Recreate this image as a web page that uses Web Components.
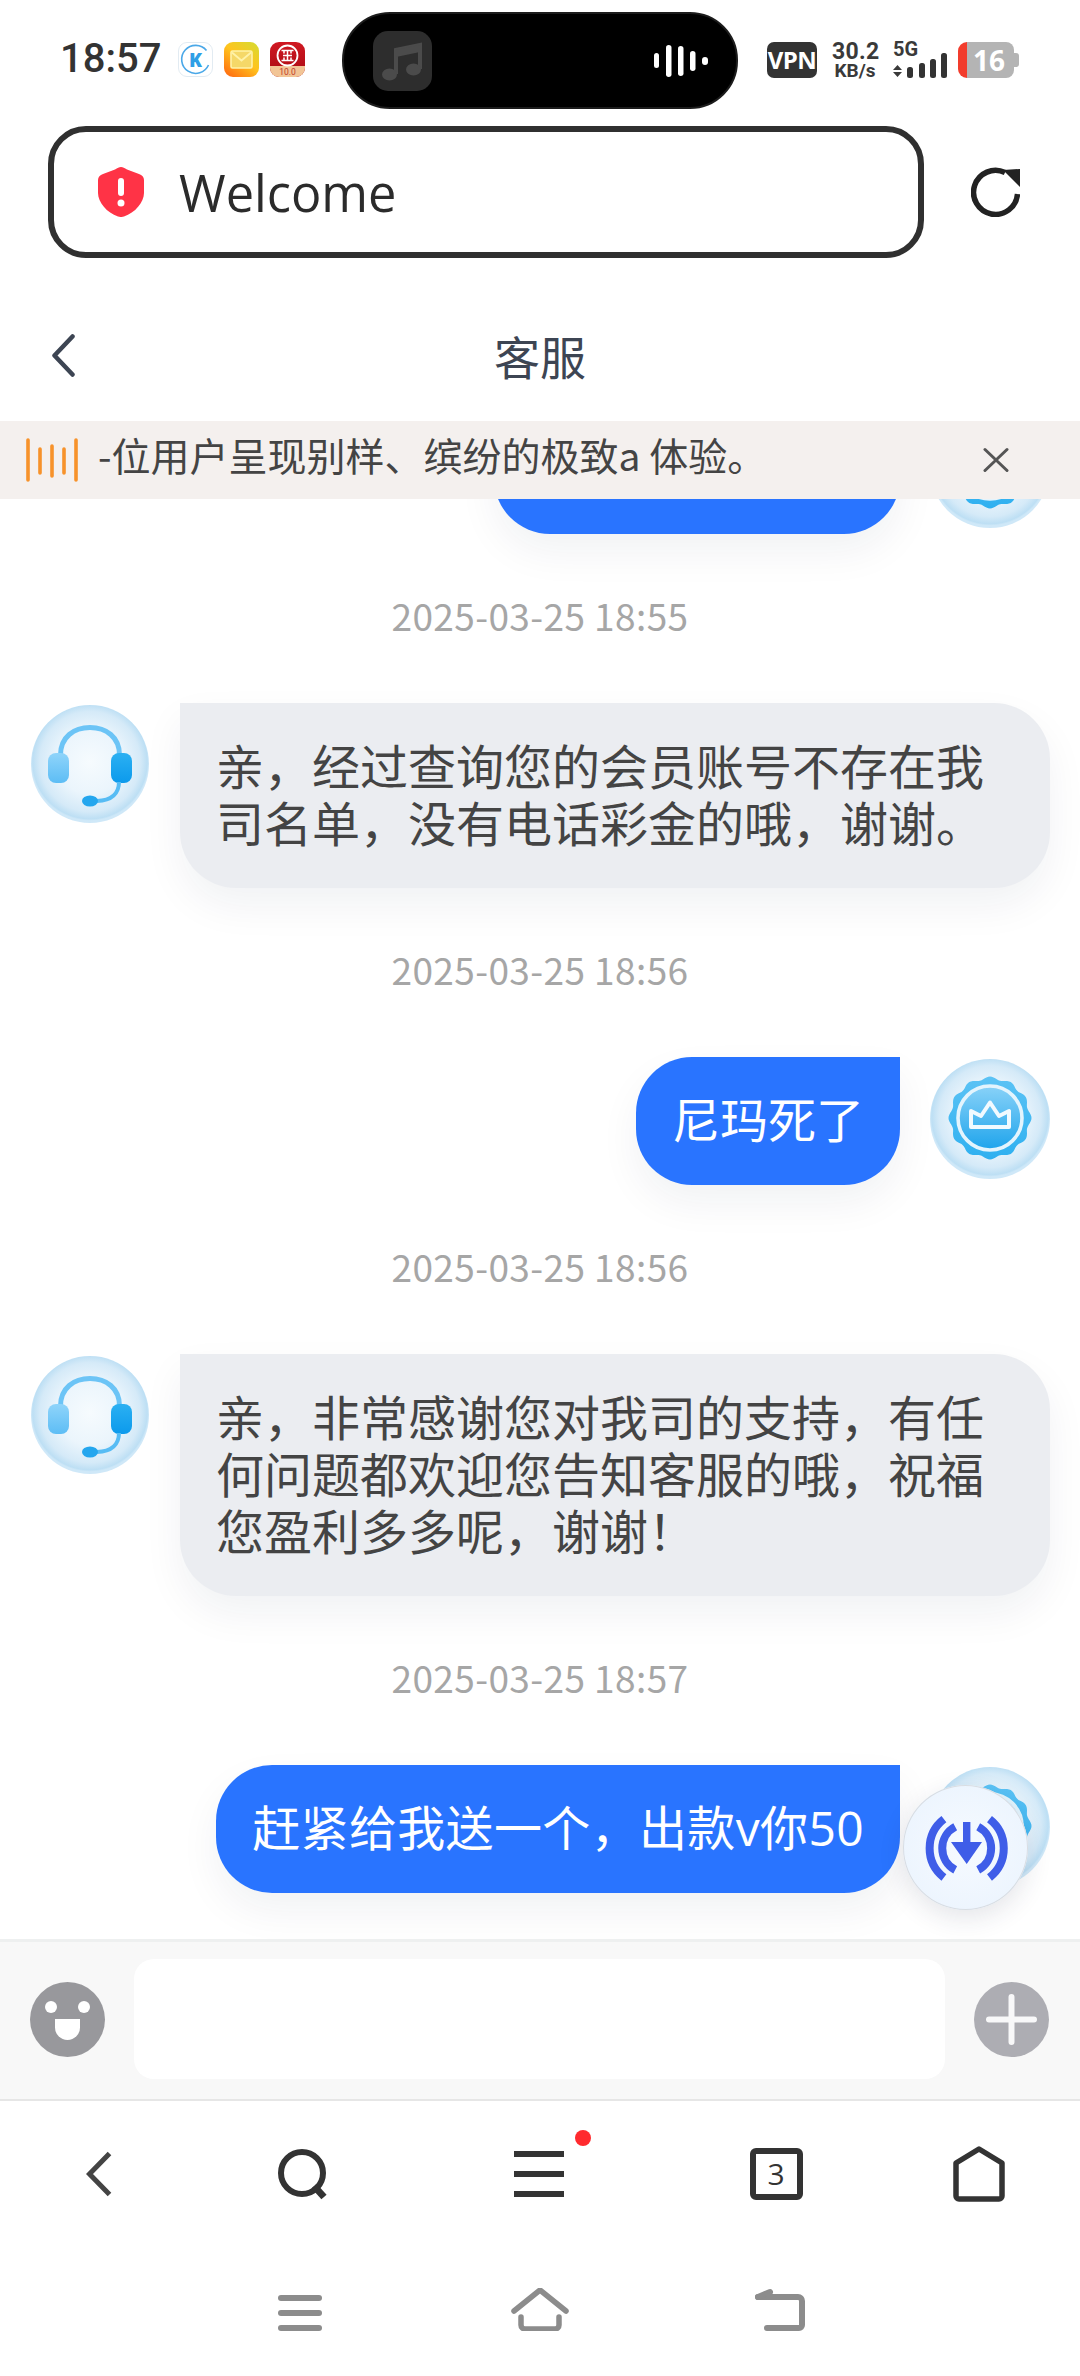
<!DOCTYPE html>
<html lang="zh"><head><meta charset="utf-8"><title>客服</title>
<style>
html,body{margin:0;padding:0;background:#fff}
body{width:1080px;height:2376px;overflow:hidden;display:flex;flex-direction:column;font-family:"Noto Sans CJK SC","Noto Sans",sans-serif}
</style></head><body>
<phone-status></phone-status>
<address-bar></address-bar>
<chat-header>客服</chat-header>
<notice-bar>-位用户呈现别样、缤纷的极致a 体验。</notice-bar>
<chat-list>
  <chat-row side="right" empty></chat-row>
  <time-label>2025-03-25 18:55</time-label>
  <chat-row side="left">亲，经过查询您的会员账号不存在我司名单，没有电话彩金的哦，谢谢。</chat-row>
  <time-label>2025-03-25 18:56</time-label>
  <chat-row side="right">尼玛死了</chat-row>
  <time-label>2025-03-25 18:56</time-label>
  <chat-row side="left">亲，非常感谢您对我司的支持，有任何问题都欢迎您告知客服的哦，祝福您盈利多多呢，谢谢！</chat-row>
  <time-label>2025-03-25 18:57</time-label>
  <chat-row side="right" style="letter-spacing:.35px">赶紧给我送一个，出款v你50</chat-row>
  <float-btn></float-btn>
</chat-list>
<chat-input></chat-input>
<browser-nav></browser-nav>
<system-nav></system-nav>
<script>
function def(name, css, html, init){
  customElements.define(name, class extends HTMLElement{
    constructor(){super();const r=this.attachShadow({mode:'open'});
      r.innerHTML='<style>'+css+'</style>'+(typeof html==='function'?html(this):html);}
    connectedCallback(){ if(init) init(this); }
  });
}
def('phone-status',`
:host{display:flex;height:120px;flex:none;align-items:flex-start;color:#333}
.left{width:342px;flex:none;display:flex;align-items:center;height:34px;margin-top:42px;box-sizing:border-box;padding-left:60px}
.time{font:500 40px/34px Roboto,sans-serif;color:#333;width:118px;flex:none;white-space:nowrap}
.left svg{display:block;flex:none;margin-right:11px}
.island{width:396px;height:97px;margin-top:12px;flex:none;box-sizing:border-box;background:#000;border:2px solid #1c1c1c;border-radius:48px;display:flex;align-items:center;padding:0 28px 0 29px;justify-content:space-between}
.music{width:59px;height:60px;display:block}
.wave{display:block}
.right{position:relative;flex:1;height:36px;margin-top:42px;display:flex;align-items:flex-start;padding-left:29px}
.vpn{width:50px;height:36px;flex:none;border-radius:7px;background:#333;color:#fff;font:700 24px/36px "Open Sans",sans-serif;text-align:center;letter-spacing:-.6px}
.speed{width:46px;margin-left:15px;flex:none;text-align:center;color:#3a3a3a}
.speed b{display:block;font:700 23px/19px Roboto,sans-serif;letter-spacing:.3px}
.speed i{display:block;font:700 19px/19px Roboto,sans-serif;font-style:normal}
.sig{margin-left:15px;flex:none;display:block;position:relative;width:54px;height:36px}
.sig span{position:absolute;left:0;top:0;font:700 20px/15px Roboto,sans-serif;color:#3a3a3a}
.sig svg{display:block}
.batt{margin-left:11px;flex:none;position:relative;width:62px;height:36px;display:flex}
.batt .red{width:9px;background:#f23c2c;border-radius:9px 0 0 9px}
.batt .gray{width:47px;background:#b4b4b4;border-radius:0 8px 8px 0;color:#fff;font:700 28px/36px "Open Sans",sans-serif;box-sizing:border-box;padding-left:6px}
.batt .nub{width:5px;height:14px;margin-top:11px;background:#b4b4b4;border-radius:0 3px 3px 0}
`,`
<div class="left"><span class="time">18:57</span>
<svg width="35" height="35" viewBox="0 0 35 35"><rect x=".5" y=".5" width="34" height="34" rx="8.5" fill="#fff" stroke="#e2ebf2"/><path d="M28.5 8.5A14 14 0 1 0 30.5 23" fill="none" stroke="#4aa8e8" stroke-width="1.6"/><text x="17.5" y="24.5" text-anchor="middle" font-family="Open Sans" font-weight="800" font-size="19" fill="#2f9fe6">K</text></svg>
<svg width="35" height="35" viewBox="0 0 35 35"><defs><linearGradient id="m" x1=".85" y1="0" x2=".1" y2="1"><stop offset="0" stop-color="#d9d92f"/><stop offset=".45" stop-color="#ffc41e"/><stop offset="1" stop-color="#ff6a10"/></linearGradient></defs><rect width="35" height="35" rx="9" fill="url(#m)"/><rect x="7" y="9" width="21" height="17" rx="1.5" fill="#f5d868" stroke="#fff2a8" stroke-width="1.6"/><path d="M8 10.5l9.5 8 9.5-8" fill="none" stroke="#fff2a8" stroke-width="1.8"/></svg>
<svg width="35" height="35" viewBox="0 0 35 35"><defs><clipPath id="b"><rect width="35" height="35" rx="9"/></clipPath><linearGradient id="r" x1="0" y1="0" x2="0" y2="1"><stop offset="0" stop-color="#d01822"/><stop offset="1" stop-color="#a80a12"/></linearGradient></defs><g clip-path="url(#b)"><rect width="35" height="35" fill="url(#r)"/><rect y="24" width="35" height="11" fill="#f2c596"/></g><circle cx="17.5" cy="13.5" r="10" fill="none" stroke="#fff" stroke-width="1.8"/><path d="M11.5 8.5h12M17.5 8.5v10M13 13.5h9M11.5 18.5h12M14 8.5v3M21 8.5v3M14 15.5v3M21 15.5v3" stroke="#fff" stroke-width="1.5" fill="none"/><text x="17.5" y="33" text-anchor="middle" font-family="Roboto" font-size="8.5" fill="#c0392b">10.0</text></svg>
</div>
<div class="island">
<svg class="music" viewBox="0 0 59 60"><rect width="59" height="60" rx="15" fill="#2d2d2d"/><path d="M23 43V19l24-5v24" fill="none" stroke="#4b4b4b" stroke-width="4"/><path d="M23 19l24-5v7l-24 5z" fill="#4b4b4b"/><ellipse cx="16.500" cy="43.500" rx="7.500" ry="6" fill="#4b4b4b"/><ellipse cx="40.500" cy="38.500" rx="7.500" ry="6" fill="#4b4b4b"/></svg>
<svg class="wave" width="54" height="34" viewBox="0 0 54 34" fill="#fff"><rect x="0" y="9" width="5" height="15" rx="2.500"/><rect x="12" y="1" width="5.500" height="32" rx="2.750"/><rect x="24" y="2" width="5.500" height="30" rx="2.750"/><rect x="36" y="7" width="5.500" height="20" rx="2.750"/><rect x="48" y="13" width="6" height="8" rx="3"/></svg>
</div>
<div class="right"><span class="vpn">VPN</span><span class="speed"><b>30.2</b><i>KB/s</i></span>
<span class="sig"><span>5G</span><svg width="54" height="36" viewBox="0 0 54 36"><path d="M0 28l4.500-5 4.500 5zM0 30l4.500 5 4.500-5z" fill="#3a3a3a"/><rect x="14" y="25" width="6" height="11" rx="2.500" fill="#333"/><rect x="26" y="21" width="6" height="15" rx="2.500" fill="#333"/><rect x="37" y="17" width="6" height="19" rx="2.500" fill="#333"/><rect x="48" y="11" width="6" height="25" rx="2.500" fill="#333"/></svg></span>
<span class="batt"><span class="red"></span><span class="gray">16</span><span class="nub"></span></span></div>
`);
def('address-bar',`
:host{display:flex;flex:none;align-items:center;height:132px;margin-top:6px;box-sizing:border-box;padding-left:48px}
.box{width:876px;height:132px;box-sizing:border-box;border:6px solid #303030;border-radius:38px;display:flex;align-items:center;padding-left:44px;gap:35px}
.t{font:400 50.5px/62px "Open Sans",sans-serif;color:#2b2b2b;padding-top:2px}
.rf{margin-left:47px;display:block}
`,`
<div class="box"><svg width="46" height="50" viewBox="0 0 46 50"><path d="M23 0c2 0 3.500 1 6 2.500L41 7c3 1 5 3 5 6v13c0 9-9 20-20 23.500-2 .7-4 .7-6 0C9 46 0 35 0 26V13c0-3 2-5 5-6l12-4.500C19.500 1 21 0 23 0z" fill="#ff3346"/><rect x="20" y="11" width="6" height="18" rx="3" fill="#fff"/><circle cx="23" cy="36" r="3.500" fill="#fff"/></svg><span class="t">Welcome</span></div>
<svg class="rf" width="49" height="50" viewBox="0 0 49 50"><path d="M46.500 27A22 22 0 1 1 34 5.500" fill="none" stroke="#222" stroke-width="5.500"/><path d="M32 3L49 2v18z" fill="#222"/></svg>
`);
def('chat-header',`
:host{display:flex;flex:none;height:126px;margin-top:37px;align-items:center;justify-content:center;position:relative;color:#3d4553;font-size:46px;line-height:60px}
svg{position:absolute;left:52px;top:39px}
.t{padding-bottom:6px}
`,`<svg width="23" height="43" viewBox="0 0 23 43"><path d="M20.500 2.500L2.500 21.500l18 19" fill="none" stroke="#3d4553" stroke-width="4.500" stroke-linecap="round" stroke-linejoin="round"/></svg><span class="t"><slot></slot></span>`);
def('notice-bar',`
:host{display:flex;flex:none;height:78px;background:#f4f0ee;align-items:center;color:#444;font-size:39px;line-height:50px;position:relative;z-index:2;box-sizing:border-box;padding-left:26px}
.txt{margin-left:20px;flex:1;white-space:nowrap;padding-bottom:12px}
.bars{display:block}
.x{display:block;margin-right:71px}
`,`<svg class="bars" width="52" height="44" viewBox="0 0 52 44" stroke="#f7922a" stroke-width="3.600" stroke-linecap="round"><path d="M2 2v40M14 11v24M26 8v30M38 11v24M50 2v40"/></svg><span class="txt"><slot></slot></span><svg class="x" width="26" height="26" viewBox="0 0 26 26"><path d="M2 2.500l22 21M24 2.500l-22 21" stroke="#555" stroke-width="3" stroke-linecap="round"/></svg>`);
def('chat-list',`
:host{display:flex;flex-direction:column;justify-content:flex-end;flex:none;height:1440px;overflow:hidden;position:relative;box-sizing:border-box;padding-bottom:46px;background:#fff}
`,`<slot></slot>`);
def('time-label',`
:host{display:block;flex:none;text-align:center;color:#a6a6a6;font-size:37px;line-height:48px;margin:57px 0 64px;letter-spacing:.4px}
`,`<slot></slot>`);
const sphere=`<defs><radialGradient id="s" cx=".5" cy=".48" r=".5"><stop offset="0" stop-color="#f6fbfe"/><stop offset=".55" stop-color="#ebf5fc"/><stop offset=".85" stop-color="#d5eaf8"/><stop offset=".97" stop-color="#bddff4"/><stop offset="1" stop-color="#cfe8f8"/></radialGradient>`;
const agentSvg=`<svg width="118" height="118" viewBox="0 0 118 118">${sphere}<linearGradient id="e1" x1="0" y1="0" x2="0" y2="1"><stop offset="0" stop-color="#8fd4fa"/><stop offset="1" stop-color="#5dbdf5"/></linearGradient><linearGradient id="e2" x1="0" y1="0" x2="0" y2="1"><stop offset="0" stop-color="#2bb0f2"/><stop offset="1" stop-color="#0c9aec"/></linearGradient></defs><circle cx="59" cy="59" r="59" fill="url(#s)"/><path d="M29.500 50C29.500 32 43 22.500 59 22.500S88.500 32 88.500 50" fill="none" stroke="#6cc4f6" stroke-width="5"/><rect x="17" y="48" width="21" height="30" rx="8" fill="url(#e1)"/><rect x="80" y="48" width="21" height="30" rx="8" fill="url(#e2)"/><path d="M88 77c0 11-7 18.500-22 19" fill="none" stroke="#57bcf4" stroke-width="4"/><ellipse cx="59" cy="96" rx="8" ry="5.500" fill="#24a6ee"/></svg>`;
let pts=[];for(let i=0;i<144;i++){const a=i/144*Math.PI*2,r=40+1.5*Math.cos(12*a);pts.push((60+r*Math.sin(a)).toFixed(1)+','+(59-r*Math.cos(a)).toFixed(1));}
const crownSvg=`<svg width="120" height="120" viewBox="0 0 120 120">${sphere}<linearGradient id="c1" x1="0" y1="0" x2="0" y2="1"><stop offset="0" stop-color="#5cc3f5"/><stop offset="1" stop-color="#2fb0f0"/></linearGradient><linearGradient id="c2" x1="0" y1="0" x2="0" y2="1"><stop offset="0" stop-color="#89d2f8"/><stop offset="1" stop-color="#1ea4ec"/></linearGradient></defs><circle cx="60" cy="60" r="60" fill="url(#s)"/><polygon points="${pts.join(' ')}" fill="url(#c1)"/><circle cx="60" cy="59" r="32" fill="url(#c2)" stroke="#e3f4fd" stroke-width="3.600"/><path d="M41 52l10 5 9-13.500 9 13.500 10-5v16H41z" fill="none" stroke="#f2faff" stroke-width="4" stroke-linejoin="round"/></svg>`;
def('chat-row',`
:host{display:flex;flex:none;gap:31px;padding:0 30px;align-items:flex-start}
:host([side=left]){padding-left:31px}
:host([side=right]){flex-direction:row-reverse;gap:30px}
.a{flex:none;display:block;margin-top:2px;width:120px}
:host([side=left]) .a{width:118px}
.b{font-family:"Open Sans","Noto Sans CJK SC",sans-serif;font-size:48px;line-height:57px;padding:35px 36px 36px;border-radius:56px;box-shadow:0 18px 40px rgba(20,30,60,.06);box-sizing:border-box;min-height:128px}
:host([side=left]) .b{flex:1;background:#ebedf1;color:#444;border-top-left-radius:0}
:host([side=right]) .b{background:#2974ff;color:#fff;border-top-right-radius:0;padding-top:34px}
:host([empty]) .b{width:406px}
svg{display:block}
`,el=>`<div class="a">${el.getAttribute('side')==='left'?agentSvg:crownSvg}</div><div class="b"><slot></slot></div>`);
def('float-btn',`
:host{position:absolute;right:52px;bottom:29px;width:125px;height:125px;display:block;z-index:3;border-radius:50%;background:radial-gradient(circle,#f6faff 0,#edf5fe 70%,#e6f1fc 100%);box-shadow:0 0 0 1px #d8dde3 inset,0 8px 26px rgba(30,40,70,.12)}
svg{display:block}
`,`<svg width="125" height="125" viewBox="0 0 125 125" fill="none" stroke="#3f5de8" stroke-width="8"><path d="M40.900 34.100A37 37 0 0 0 40.900 92.500M86.500 34.100A37 37 0 0 1 86.500 92.500"/><path d="M52.200 41.700A24.500 24.500 0 0 0 52.200 84.900M75.200 41.700A24.500 24.500 0 0 1 75.200 84.900"/><path d="M60 37h7.400v20H79L63.700 79 48 57h12z" fill="#3f5de8" stroke="none"/></svg>`);
def('chat-input',`
:host{display:flex;flex:none;height:162px;box-sizing:border-box;background:#f8f8f8;border-top:3px solid #eef0f0;border-bottom:2px solid #e6e6e6;align-items:center;padding:0 30px 3px}
.f{flex:none;width:811px;height:120px;border-radius:20px;background:#fff;margin:0 29px 0 29px}
svg{display:block;flex:none}
`,`<svg width="75" height="75" viewBox="0 0 75 75"><circle cx="37.500" cy="37.500" r="37.500" fill="#98989c"/><circle cx="21" cy="25" r="6" fill="#fff"/><circle cx="54" cy="25" r="6" fill="#fff"/><path d="M25 37h25v8.500a12.500 12.500 0 0 1-25 0z" fill="#fff"/></svg><div class="f"></div><svg width="75" height="75" viewBox="0 0 75 75"><circle cx="37.500" cy="37.500" r="37.500" fill="#adadb3"/><path d="M15 37.500h45M37.500 15v45" stroke="#fff" stroke-width="6" stroke-linecap="round" opacity=".92"/></svg>`);
def('browser-nav',`
:host{display:grid;flex:none;height:146px;grid-template-columns:198px 210px 262px 212px 194px;align-items:center;justify-items:center;position:relative}
svg{display:block}
.tab{position:relative;width:53px;height:52px;box-sizing:border-box;border:6px solid #333;border-radius:6px;text-align:center;color:#333;font:500 30px/40px "Open Sans",sans-serif}
.m{position:relative;width:50px}
.dot{position:absolute;left:61px;top:-21px;width:16px;height:16px;border-radius:50%;background:#ff2a2e}
`,`
<svg width="26" height="46" viewBox="0 0 26 46"><path d="M23.500 2.500L3.500 23l20 20.500" fill="none" stroke="#444" stroke-width="5"/></svg>
<svg width="50" height="51" viewBox="0 0 50 51"><circle cx="24" cy="24" r="21" fill="none" stroke="#333" stroke-width="6"/><path d="M36 37l10 11" stroke="#333" stroke-width="7"/></svg>
<div class="m"><svg width="50" height="46" viewBox="0 0 50 46" fill="#333"><rect y="0" width="50" height="6"/><rect y="20" width="50" height="6"/><rect y="40" width="50" height="6"/></svg><span class="dot"></span></div>
<div class="tab">3</div>
<svg width="52" height="56" viewBox="0 0 52 56"><path d="M26 3L49 17v33a3 3 0 0 1-3 3H6a3 3 0 0 1-3-3V17z" fill="none" stroke="#333" stroke-width="5.500" stroke-linejoin="round"/></svg>
`);
def('system-nav',`
:host{display:grid;flex:none;height:129px;grid-template-columns:180px 240px 240px 240px 180px;align-items:start;justify-items:center;box-sizing:border-box;padding-top:41px}
svg{display:block}
`,`<span></span>
<svg width="44" height="43" viewBox="0 0 44 43" fill="#8c8c8c"><rect y="7" width="44" height="6" rx="3"/><rect y="22" width="44" height="6" rx="3"/><rect y="37" width="44" height="6" rx="3"/></svg>
<svg width="58" height="43" viewBox="0 0 58 43" fill="none" stroke="#8c8c8c" stroke-width="5.500" stroke-linecap="round"><path d="M3 23L29 2l26 21"/><path d="M10 29v8a4 4 0 0 0 4 4h30a4 4 0 0 0 4-4v-8"/></svg>
<svg width="50" height="43" viewBox="0 0 50 43" fill="none" stroke="#8c8c8c" stroke-width="6" stroke-linecap="round" stroke-linejoin="round"><path d="M3 9h40a4 4 0 0 1 4 4v24a3 3 0 0 1-3 3H12"/><path d="M3 9l12-5"/></svg>
<span></span>`);
</script>
</body></html>
